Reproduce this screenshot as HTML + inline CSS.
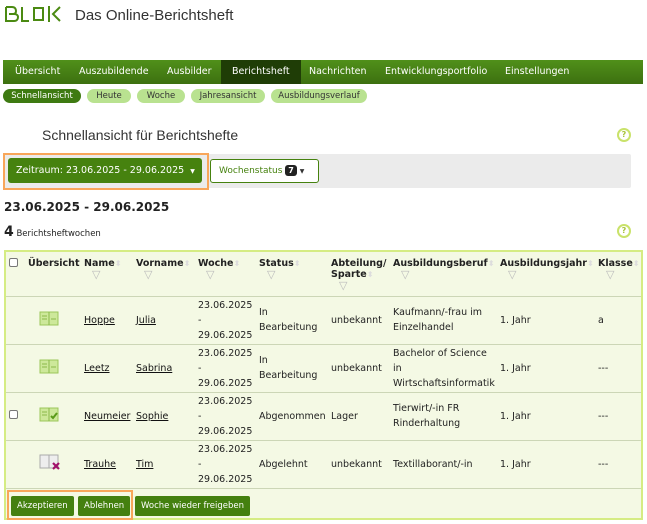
<!DOCTYPE html>
<html><head><meta charset="utf-8"><style>
*{box-sizing:border-box;margin:0;padding:0}
body{width:647px;height:524px;background:#fff;font-family:"DejaVu Sans",Verdana,sans-serif;font-size:9.5px;color:#222;position:relative;overflow:hidden}
.abs{position:absolute}
.title{left:75px;top:7px;font-family:"Liberation Sans",sans-serif;font-size:15px;color:#333}
.nav{left:3px;top:60px;width:640px;height:24px;background:linear-gradient(#50901a,#3d7010)}
.nav span{position:absolute;top:0;height:24px;line-height:24px;color:#fff;font-size:9.5px;white-space:nowrap}
.nav .act{background:#1f3d06;padding:0 11px}
.pill{position:absolute;top:89px;height:14px;line-height:14px;border-radius:7px;background:#b9e290;color:#333;font-size:8.5px;text-align:center}
.pill.on{background:#3e7a12;color:#fff}
.help{width:14px;height:14px;border:2px solid #c9e26a;border-radius:50%;color:#a9c43c;font-size:8px;font-weight:bold;text-align:center;line-height:10px}
table{position:absolute;left:4px;top:250px;width:639px;border-collapse:collapse;border:2px solid #d5ec83;background:#f4f9e4;table-layout:fixed}
td,th{vertical-align:middle;text-align:left;padding:0 3px;font-size:9.5px}
th{vertical-align:top;padding-top:6px;font-weight:bold;height:45px;border-bottom:1px solid #ccd6b6}
tr.r td{height:48px;border-bottom:1px solid #ccd6b6;line-height:15px}
a{color:#111;text-decoration:underline}
.f{display:block;color:#bbb;font-size:11px;line-height:11px;margin-left:8px}
.s{color:#ddd;font-size:8px}
.cb{display:inline-block;width:9px;height:9px;border:1px solid #777;border-radius:2px;background:#fff}
.btn{display:inline-block;height:20px;line-height:20px;background:#44800f;color:#fff;border-radius:2px;font-size:8.5px;padding:0 6px}
</style></head><body>
<svg class="abs" style="left:4px;top:5px" width="60" height="18" viewBox="0 0 60 18"><g fill="none" stroke="#4b8a12" stroke-width="2"><path d="M2 2v14h8c3 0 4-2 4-4s-2-3-4-3h-5M5 9h4c2 0 3-1 3-3s-1-4-4-4H2"/><path d="M18 2v14h7"/><path d="M30 3h9v12h-9z"/><path d="M45 1v16M56 2l-7 7 7 7"/></g></svg>
<div class="abs title">Das Online-Berichtsheft</div>
<div class="abs nav">
<span style="left:12px">Übersicht</span><span style="left:76px">Auszubildende</span><span style="left:164px">Ausbilder</span><span class="act" style="left:218px">Berichtsheft</span><span style="left:306px">Nachrichten</span><span style="left:382px">Entwicklungsportfolio</span><span style="left:502px">Einstellungen</span>
</div>
<div class="pill on" style="left:3px;width:78px">Schnellansicht</div>
<div class="pill" style="left:87px;width:44px">Heute</div>
<div class="pill" style="left:137px;width:48px">Woche</div>
<div class="pill" style="left:191px;width:74px">Jahresansicht</div>
<div class="pill" style="left:271px;width:96px">Ausbildungsverlauf</div>
<div class="abs" style="left:42px;top:127px;font-family:'Liberation Sans',sans-serif;font-size:14px;color:#333">Schnellansicht für Berichtshefte</div>
<div class="abs help" style="left:617px;top:128px">?</div>
<div class="abs" style="left:3px;top:154px;width:628px;height:34px;background:#ebebeb;border-radius:2px"></div>
<div class="abs" style="left:3px;top:153px;width:206px;height:37px;border:2px solid #f8a65a"></div>
<div class="abs" style="left:8px;top:158px;width:194px;height:25px;background:#46820f;border-radius:3px;color:#fff;font-size:9.5px;line-height:25px;padding-left:8px">Zeitraum: 23.06.2025 - 29.06.2025 &nbsp;<span style="font-size:6px">▼</span></div>
<div class="abs" style="left:210px;top:159px;width:109px;height:24px;background:#fff;border:1px solid #46820f;border-radius:3px;color:#46820f;font-size:9px;line-height:22px;padding-left:8px">Wochenstatus <span style="display:inline-block;background:#222;color:#fff;border-radius:3px;padding:0 3px;font-size:8px;line-height:11px;font-weight:bold">7</span> <span style="font-size:6px;color:#333">▼</span></div>
<div class="abs" style="left:4px;top:200px;font-size:12px;font-weight:bold;color:#222">23.06.2025 - 29.06.2025</div>
<div class="abs" style="left:4px;top:224px;font-size:8.5px"><b style="font-size:14px">4</b> Berichtsheftwochen</div>
<div class="abs help" style="left:617px;top:224px">?</div>
<table>
<colgroup><col style="width:20px"><col style="width:56px"><col style="width:52px"><col style="width:62px"><col style="width:61px"><col style="width:72px"><col style="width:62px"><col style="width:107px"><col style="width:98px"><col style="width:47px"></colgroup>
<tr><th><span class="cb"></span></th><th>Übersicht</th><th>Name<span class="s">⬍</span><span class="f">▽</span></th><th>Vorname<span class="s">⬍</span><span class="f">▽</span></th><th>Woche<span class="s">⬍</span><span class="f">▽</span></th><th>Status<span class="s">⬍</span><span class="f">▽</span></th><th>Abteilung/ Sparte<span class="s">⬍</span><span class="f">▽</span></th><th>Ausbildungsberuf<span class="s">⬍</span><span class="f">▽</span></th><th>Ausbildungsjahr<span class="s">⬍</span><span class="f">▽</span></th><th>Klasse<span class="s">⬍</span><span class="f">▽</span></th></tr>
<tr class="r"><td></td><td style="padding-left:14px"><svg width="20" height="16"><rect x="1" y="2" width="18" height="13" fill="#cde89a" stroke="#9cc65a"/><path d="M10 2v13M3 6h5M3 9h5M12 9h5" stroke="#8ab84a"/></svg></td><td><a>Hoppe</a></td><td><a>Julia</a></td><td>23.06.2025<br>-<br>29.06.2025</td><td>In<br>Bearbeitung</td><td>unbekannt</td><td>Kaufmann/-frau im Einzelhandel</td><td>1. Jahr</td><td>a</td></tr>
<tr class="r"><td></td><td style="padding-left:14px"><svg width="20" height="16"><rect x="1" y="2" width="18" height="13" fill="#cde89a" stroke="#9cc65a"/><path d="M10 2v13M3 6h5M3 9h5M12 9h5" stroke="#8ab84a"/></svg></td><td><a>Leetz</a></td><td><a>Sabrina</a></td><td>23.06.2025<br>-<br>29.06.2025</td><td>In<br>Bearbeitung</td><td>unbekannt</td><td>Bachelor of Science in Wirtschaftsinformatik</td><td>1. Jahr</td><td>---</td></tr>
<tr class="r"><td><span class="cb"></span></td><td style="padding-left:14px"><svg width="20" height="16"><rect x="1" y="2" width="18" height="13" fill="#cde89a" stroke="#9cc65a"/><path d="M10 2v13M3 6h5M3 9h5" stroke="#8ab84a"/><path d="M12 10l2 2 4-5" stroke="#5a9a1a" stroke-width="2" fill="none"/></svg></td><td><a>Neumeier</a></td><td><a>Sophie</a></td><td>23.06.2025<br>-<br>29.06.2025</td><td>Abgenommen</td><td>Lager</td><td>Tierwirt/-in FR Rinderhaltung</td><td>1. Jahr</td><td>---</td></tr>
<tr class="r"><td></td><td style="padding-left:14px"><svg width="22" height="18"><rect x="1" y="2" width="18" height="13" fill="#eee" stroke="#aaa"/><path d="M10 2v13" stroke="#aaa"/><path d="M14 10l6 6M20 10l-6 6" stroke="#a0106a" stroke-width="2.2"/></svg></td><td><a>Trauhe</a></td><td><a>Tim</a></td><td>23.06.2025<br>-<br>29.06.2025</td><td>Abgelehnt</td><td>unbekannt</td><td>Textillaborant/-in</td><td>1. Jahr</td><td>---</td></tr>
<tr><td colspan="10" style="height:31px"></td></tr>
</table>
<div class="abs" style="left:7px;top:490px;width:126px;height:30px;border:2px solid #f8a65a"></div>
<div class="abs" style="left:11px;top:496px"><span class="btn">Akzeptieren</span></div>
<div class="abs" style="left:78px;top:496px"><span class="btn">Ablehnen</span></div>
<div class="abs" style="left:135px;top:496px"><span class="btn" style="padding:0 6px">Woche wieder freigeben</span></div>
</body></html>
